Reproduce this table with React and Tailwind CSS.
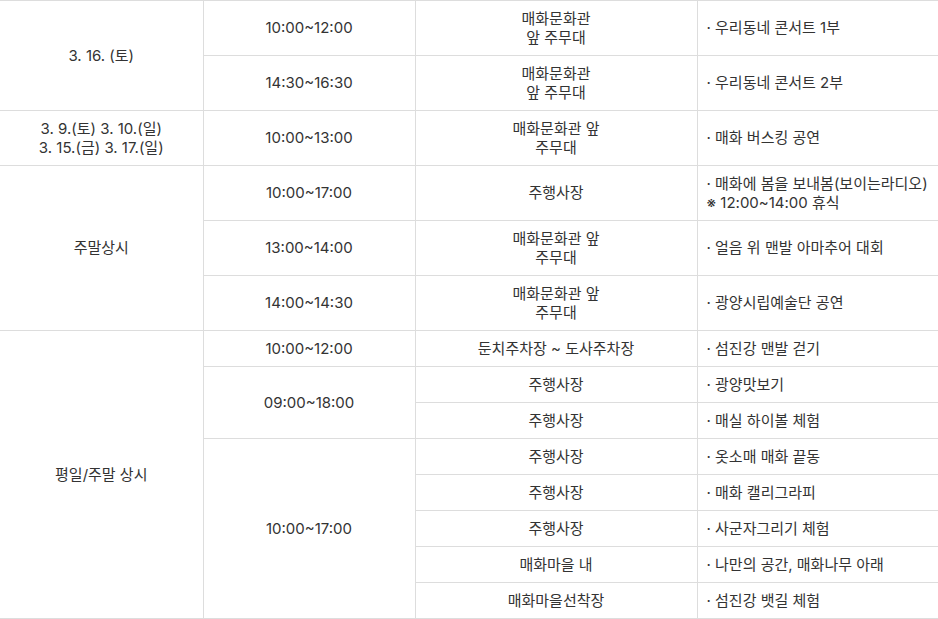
import React from "react";

const td = "border border-[#dddddd] text-center align-middle px-2";
const tdL = "border border-[#dddddd] text-left align-middle pl-[9px] pr-2";

export default function App() {
  return (
    <div className="w-[938px] bg-white">
      <table
        className="w-[938px] border-collapse table-fixed text-[15px] leading-[1.3] text-[#333333] border-x-0"
        style={{ fontFamily: '"Inter", "Noto Sans CJK KR", sans-serif' }}
      >
        <colgroup>
          <col className="w-[203px]" />
          <col className="w-[212px]" />
          <col className="w-[282px]" />
          <col className="w-[241px]" />
        </colgroup>
        <tbody>
          <tr className="h-[55px]">
            <td rowSpan={2} className={td + " border-l-0"}>3. 16. (토)</td>
            <td className={td}>10:00~12:00</td>
            <td className={td}>매화문화관<br />앞 주무대</td>
            <td className={tdL + " border-r-0"}>· 우리동네 콘서트 1부</td>
          </tr>
          <tr className="h-[55px]">
            <td className={td}>14:30~16:30</td>
            <td className={td}>매화문화관<br />앞 주무대</td>
            <td className={tdL + " border-r-0"}>· 우리동네 콘서트 2부</td>
          </tr>
          <tr className="h-[55px]">
            <td className={td + " border-l-0"}>3. 9.(토) 3. 10.(일)<br />3. 15.(금) 3. 17.(일)</td>
            <td className={td}>10:00~13:00</td>
            <td className={td}>매화문화관 앞<br />주무대</td>
            <td className={tdL + " border-r-0"}>· 매화 버스킹 공연</td>
          </tr>
          <tr className="h-[55px]">
            <td rowSpan={3} className={td + " border-l-0"}>주말상시</td>
            <td className={td}>10:00~17:00</td>
            <td className={td}>주행사장</td>
            <td className={tdL + " border-r-0"}>· 매화에 봄을 보내봄(보이는라디오)<br />※ 12:00~14:00 휴식</td>
          </tr>
          <tr className="h-[55px]">
            <td className={td}>13:00~14:00</td>
            <td className={td}>매화문화관 앞<br />주무대</td>
            <td className={tdL + " border-r-0"}>· 얼음 위 맨발 아마추어 대회</td>
          </tr>
          <tr className="h-[55px]">
            <td className={td}>14:00~14:30</td>
            <td className={td}>매화문화관 앞<br />주무대</td>
            <td className={tdL + " border-r-0"}>· 광양시립예술단 공연</td>
          </tr>
          <tr className="h-[36px]">
            <td rowSpan={8} className={td + " border-l-0"}>평일/주말 상시</td>
            <td className={td}>10:00~12:00</td>
            <td className={td}>둔치주차장 ~ 도사주차장</td>
            <td className={tdL + " border-r-0"}>· 섬진강 맨발 걷기</td>
          </tr>
          <tr className="h-[36px]">
            <td rowSpan={2} className={td}>09:00~18:00</td>
            <td className={td}>주행사장</td>
            <td className={tdL + " border-r-0"}>· 광양맛보기</td>
          </tr>
          <tr className="h-[36px]">
            <td className={td}>주행사장</td>
            <td className={tdL + " border-r-0"}>· 매실 하이볼 체험</td>
          </tr>
          <tr className="h-[36px]">
            <td rowSpan={5} className={td}>10:00~17:00</td>
            <td className={td}>주행사장</td>
            <td className={tdL + " border-r-0"}>· 옷소매 매화 끝동</td>
          </tr>
          <tr className="h-[36px]">
            <td className={td}>주행사장</td>
            <td className={tdL + " border-r-0"}>· 매화 캘리그라피</td>
          </tr>
          <tr className="h-[36px]">
            <td className={td}>주행사장</td>
            <td className={tdL + " border-r-0"}>· 사군자그리기 체험</td>
          </tr>
          <tr className="h-[36px]">
            <td className={td}>매화마을 내</td>
            <td className={tdL + " border-r-0"}>· 나만의 공간, 매화나무 아래</td>
          </tr>
          <tr className="h-[36px]">
            <td className={td}>매화마을선착장</td>
            <td className={tdL + " border-r-0"}>· 섬진강 뱃길 체험</td>
          </tr>
        </tbody>
      </table>
    </div>
  );
}
